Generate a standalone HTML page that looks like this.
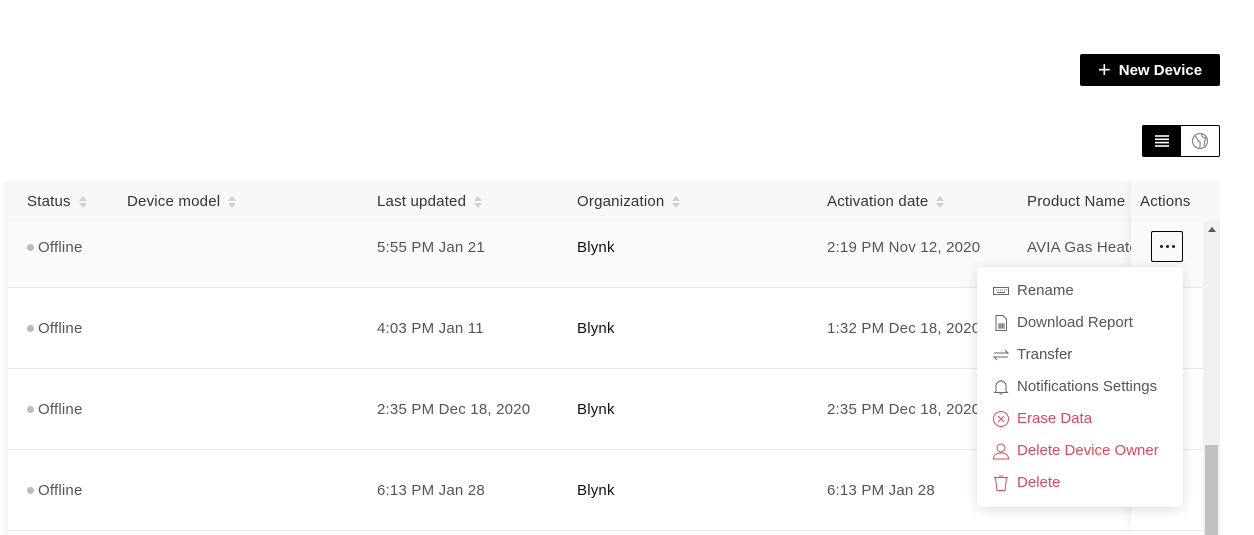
<!DOCTYPE html>
<html><head><style>
*{box-sizing:border-box;margin:0;padding:0}
body{width:1254px;height:535px;overflow:hidden;background:#fff;font-family:"Liberation Sans",sans-serif;position:relative;color:#333;font-size:15px}
.abs{position:absolute}
.btn{left:1080px;top:54px;width:140px;height:32px;background:#000;color:#fff;font-weight:bold;font-size:15px;display:flex;align-items:center;justify-content:center;border-radius:2px}
.tog{left:1142px;top:125px;width:78px;height:32px;border:1px solid #000;border-radius:2px;display:flex}
.tog div{width:38px;height:30px;display:flex;align-items:center;justify-content:center}
.hdr{left:8px;top:181px;width:1212px;height:40px;background:#f8f8f8}
.th{top:193px;font-size:15px;color:#333;letter-spacing:.2px}
.sort{display:inline-block;width:8px;height:14px;vertical-align:middle;margin-left:8px;position:relative}
.sort:before{content:"";position:absolute;top:1px;left:0;border:4px solid transparent;border-bottom:5px solid #d0d0d0;border-top:0}
.sort:after{content:"";position:absolute;top:8px;left:0;border:4px solid transparent;border-top:5px solid #d0d0d0;border-bottom:0}
.row{left:8px;width:1196px;height:81px;border-bottom:1px solid #e8e8e8}
.td{font-size:15px;color:#555;letter-spacing:.2px}
.dot{display:inline-block;width:7px;height:7px;border-radius:50%;background:#bbb;margin-right:4px;vertical-align:middle;position:relative;top:-1px}
.act{left:1131px;top:181px;width:73px;height:354px;box-shadow:-6px 0 8px -4px rgba(0,0,0,.08)}
.menu{left:977px;top:267px;width:206px;height:240px;background:#fff;border-radius:4px;box-shadow:0 2px 12px rgba(0,0,0,.15)}
.mi{position:absolute;left:15px;height:32px;display:flex;align-items:center;font-size:15px;color:#555;padding-top:1px}
.mi svg{width:18px;height:18px;margin-right:7px}
.red{color:#e0475a}
</style></head><body>
<div class="abs btn"><span style="font-size:22px;font-weight:normal;margin-right:8px;line-height:1">+</span>New Device</div>
<div class="abs tog"><div style="background:#000"><svg width="14" height="12"><g stroke="#fff" stroke-width="1.6"><line x1="0" y1="1" x2="14" y2="1"/><line x1="0" y1="4.3" x2="14" y2="4.3"/><line x1="0" y1="7.6" x2="14" y2="7.6"/><line x1="0" y1="11" x2="14" y2="11"/></g></svg></div><div><svg width="18" height="18" viewBox="0 0 18 18" fill="none" stroke="#888" stroke-width="1.2"><circle cx="9" cy="9" r="7.5"/><path d="M4 4 C7 6 6 9 9 10 C10 13 8 15 9 16.5 M11 2 C10 5 13 6 15 6 C13 8 14 11 13 14"/></svg></div></div>

<div class="abs" style="left:0;top:181px;width:8px;height:354px;background:linear-gradient(90deg,#fff,#f3f3f3)"></div>
<div class="abs hdr"></div>
<div class="abs" style="left:8px;top:221px;width:1196px;height:66px;background:#fafafa"></div>
<div class="abs row" style="top:207px"></div>
<div class="abs row" style="top:288px"></div>
<div class="abs row" style="top:369px"></div>
<div class="abs row" style="top:450px"></div>

<div class="abs th" style="left:27px">Status<span class="sort"></span></div>
<div class="abs th" style="left:127px">Device model<span class="sort"></span></div>
<div class="abs th" style="left:377px">Last updated<span class="sort"></span></div>
<div class="abs th" style="left:577px">Organization<span class="sort"></span></div>
<div class="abs th" style="left:827px">Activation date<span class="sort"></span></div>
<div class="abs th" style="left:1027px">Product Name</div>

<div class="abs td" style="left:27px;top:239px"><span class="dot"></span>Offline</div>
<div class="abs td" style="left:377px;top:239px">5:55 PM Jan 21</div>
<div class="abs td" style="left:577px;top:239px;color:#111">Blynk</div>
<div class="abs td" style="left:827px;top:239px">2:19 PM Nov 12, 2020</div>
<div class="abs td" style="left:1027px;top:239px;white-space:nowrap;width:104px;overflow:hidden">AVIA Gas Heater</div>

<div class="abs td" style="left:27px;top:320px"><span class="dot"></span>Offline</div>
<div class="abs td" style="left:377px;top:320px">4:03 PM Jan 11</div>
<div class="abs td" style="left:577px;top:320px;color:#111">Blynk</div>
<div class="abs td" style="left:827px;top:320px">1:32 PM Dec 18, 2020</div>

<div class="abs td" style="left:27px;top:401px"><span class="dot"></span>Offline</div>
<div class="abs td" style="left:377px;top:401px">2:35 PM Dec 18, 2020</div>
<div class="abs td" style="left:577px;top:401px;color:#111">Blynk</div>
<div class="abs td" style="left:827px;top:401px">2:35 PM Dec 18, 2020</div>

<div class="abs td" style="left:27px;top:482px"><span class="dot"></span>Offline</div>
<div class="abs td" style="left:377px;top:482px">6:13 PM Jan 28</div>
<div class="abs td" style="left:577px;top:482px;color:#111">Blynk</div>
<div class="abs td" style="left:827px;top:482px">6:13 PM Jan 28</div>

<div class="abs act"></div>
<div class="abs th" style="left:1140px">Actions</div>
<div class="abs" style="left:1151px;top:231px;width:32px;height:31px;border:1px solid #000;border-radius:2px;display:flex;align-items:center;justify-content:center;gap:3px"><i style="width:3px;height:3px;background:#222;border-radius:50%"></i><i style="width:3px;height:3px;background:#222;border-radius:50%"></i><i style="width:3px;height:3px;background:#222;border-radius:50%"></i></div>

<div class="abs" style="left:1203px;top:221px;width:17px;height:314px;background:#f1f1f1"></div>
<div class="abs" style="left:1208px;top:227px;border:4px solid transparent;border-bottom:5px solid #555;border-top:0"></div>
<div class="abs" style="left:1205px;top:445px;width:13px;height:90px;background:#c1c1c1"></div>

<div class="abs menu">
<div class="mi" style="top:7px"><svg viewBox="0 0 18 18" fill="none" stroke="#666" stroke-width="1"><rect x="1.5" y="5.5" width="15" height="7"/><path d="M4 8h1M6 8h1M8 8h1M10 8h1M12 8h1M14 8h1M5 10.5h8"/></svg>Rename</div>
<div class="mi" style="top:39px"><svg viewBox="0 0 18 18" fill="none" stroke="#666" stroke-width="1"><path d="M4 1.5h7l3.5 3.5v11.5h-10.5z"/><path d="M6 10h7M6 12h7M6 14h7M8 10v4M10.5 10v4"/></svg>Download Report</div>
<div class="mi" style="top:71px"><svg viewBox="0 0 18 18" fill="none" stroke="#666" stroke-width="1"><path d="M2 7h14l-3-3M16 11H2l3 3"/></svg>Transfer</div>
<div class="mi" style="top:103px"><svg viewBox="0 0 18 18" fill="none" stroke="#666" stroke-width="1"><path d="M4 13V8a5 5 0 0 1 10 0v5l1.5 1.5h-13zM7.5 16h3M9 2v1"/></svg>Notifications Settings</div>
<div class="mi red" style="top:135px"><svg viewBox="0 0 18 18" fill="none" stroke="#e0475a" stroke-width="1"><circle cx="9" cy="9" r="7.5"/><path d="M6 6l6 6M12 6l-6 6"/></svg>Erase Data</div>
<div class="mi red" style="top:167px"><svg viewBox="0 0 18 18" fill="none" stroke="#e0475a" stroke-width="1"><circle cx="9" cy="6" r="4"/><path d="M1.5 17c0-4 3-6 7.5-6s7.5 2 7.5 6z"/></svg>Delete Device Owner</div>
<div class="mi red" style="top:199px"><svg viewBox="0 0 18 18" fill="none" stroke="#e0475a" stroke-width="1"><path d="M2 3.5h14M3.5 3.5l1.5 13h8l1.5-13M7 2h4"/></svg>Delete</div>
</div>
</body></html>
